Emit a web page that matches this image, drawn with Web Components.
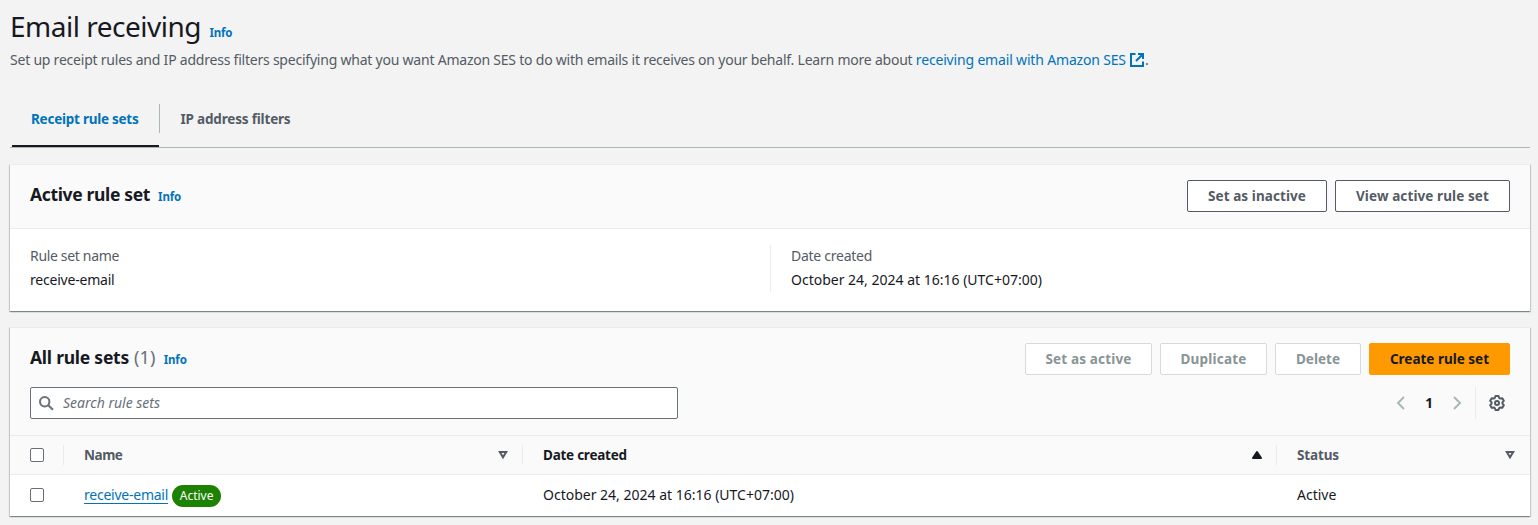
<!DOCTYPE html>
<html lang="en"><head><meta charset="utf-8"><title>Email receiving</title>
<style>body{margin:0;background:#f3f3f3;font-family:"Noto Sans","Open Sans",sans-serif;font-size:14px;line-height:20px;color:#16191f}</style></head>
<body><ses-page></ses-page>
<script>
const define = (name, html, setup) => customElements.define(name, class extends HTMLElement {
  constructor() { super(); this.attachShadow({mode: 'open'}).innerHTML = html; }
  connectedCallback() { if (setup) setup(this, this.shadowRoot); }
});

/* Text run with its own size, weight and tracking. */
define('ui-text', `<style>:host{display:inline-block;white-space:pre}</style><slot></slot>`, el => {
  const a = n => el.getAttribute(n);
  if (a('size')) el.style.fontSize = a('size') + 'px';
  if (a('weight')) el.style.fontWeight = a('weight');
  if (a('track')) el.style.letterSpacing = a('track') + 'px';
});

define('ui-info', `<style>:host{display:inline-block;font-size:11.5px;font-weight:700;color:#0073bb;letter-spacing:-.15px}</style><slot></slot>`);

const icons = {
  external: '<path d="M6.500 2H2v12h12V9.500M9 2h5v5M14 2 7 9" fill="none" stroke="currentColor" stroke-width="2"/>',
  search: '<circle cx="6.700" cy="6.700" r="4.700" fill="none" stroke="currentColor" stroke-width="2"/><path d="m10.200 10.200 4.800 4.600" fill="none" stroke="currentColor" stroke-width="2"/>',
  left: '<path d="m11 2-6 6 6 6" fill="none" stroke="currentColor" stroke-width="2"/>',
  right: '<path d="m5 2 6 6-6 6" fill="none" stroke="currentColor" stroke-width="2"/>',
  down: '<path d="M4.800 4.900h6.400L8 10.300Z" fill="none" stroke="currentColor" stroke-width="2"/>',
  up: '<path d="M4 11h8L8 5Z" fill="currentColor" stroke="currentColor" stroke-width="2" stroke-linejoin="round"/>',
  gear: '<path d="M6.500 1h3l.7 2 1 .6 2.100-.4 1.500 2.600L13.400 7.400v1.200l1.400 1.600-1.500 2.600-2.100-.4-1 .6-.7 2h-3l-.7-2-1-.6-2.100.4-1.500-2.600L2.600 8.600V7.400L1.200 5.800l1.500-2.600 2.100.4 1-.6Z" fill="none" stroke="currentColor" stroke-width="2" stroke-linejoin="round"/><circle cx="8" cy="8" r="2" fill="none" stroke="currentColor" stroke-width="2"/>'
};
define('ui-icon', `<style>:host{display:inline-block;width:16px;height:16px;flex:none}svg{display:block}</style><svg width="16" height="16" viewBox="0 0 16 16"></svg>`,
  (el, r) => { r.querySelector('svg').innerHTML = icons[el.getAttribute('name')]; });

define('ui-button', `<style>
:host{display:flex;align-items:center;justify-content:center;box-sizing:border-box;height:32px;border:1px solid #545b64;border-radius:2px;background:#fff;color:#545b64;font-size:13.5px;font-weight:700;white-space:pre}
:host([disabled]){border-color:#d5dbdb;color:#879596}
:host([primary]){border-color:#f90;background:#f90;color:#16191f}
</style><slot></slot>`, el => { el.style.width = el.getAttribute('width') + 'px'; el.style.letterSpacing = el.getAttribute('track') + 'px'; });

define('ui-checkbox', `<style>:host{display:block;box-sizing:border-box;width:14px;height:14px;border:1px solid #687078;border-radius:2px;background:#fff}</style>`);

define('ui-badge', `<style>:host{display:inline-flex;align-items:center;justify-content:center;width:49px;height:22px;margin-top:2px;border-radius:11px;background:#1d8102;color:#fff;font-size:12px}</style><slot></slot>`);

define('ui-card', `<style>
:host{display:block;box-sizing:border-box;background:#fff;border-top:1px solid #eaeded;box-shadow:0 1px 1px 0 rgba(0,28,36,.3),1px 1px 1px 0 rgba(0,28,36,.15),-1px 1px 1px 0 rgba(0,28,36,.15)}
header{background:#fafafa;border-bottom:1px solid #eaeded;padding:15px 20px 16px}
</style><header><slot name="header"></slot></header><slot></slot>`);

define('ui-heading', `<style>:host{display:flex;justify-content:space-between;height:32px}
.t{display:flex;align-items:baseline;gap:8px;height:28px;line-height:28px}.a{display:flex;gap:8px}</style>
<div class="t"><slot></slot></div><div class="a"><slot name="actions"></slot></div>`);

define('ui-tabs', `<style>
:host{display:flex;height:44px;border-bottom:1px solid #aab7b8;font-size:13.5px;font-weight:700;color:#545b64}
div{box-sizing:border-box;height:44px;line-height:32px}
.on{width:147px;margin-left:2px;padding-left:19px;border-bottom:2px solid #16191f;color:#0073bb}
.sep{width:1px;height:29px;margin-top:1px;background:#aab7b8}
.off{padding-left:20.5px}
</style><div class="on"><ui-text track="-.25">Receipt rule sets</ui-text></div><div class="sep"></div><div class="off"><ui-text track="-.18">IP address filters</ui-text></div>`);

define('ui-field', `<style>:host{display:block;line-height:24px;height:47px}.l{color:#545b64}.l,.v{position:relative;top:-1px}</style>
<div class="l"><slot name="label"></slot></div><div class="v"><slot></slot></div>`);

define('rule-summary', `<style>:host{display:grid;grid-template-columns:740px 1fr;padding:16px 20px 0}
.r{border-left:1px solid #eaeded;padding-left:20px}</style>
<ui-field><ui-text slot="label" track="-.33">Rule set name</ui-text><ui-text track="-.21">receive-email</ui-text></ui-field>
<div class="r"><ui-field><ui-text slot="label" track="-.26">Date created</ui-text>October 24, 2024 at 16:16 (UTC+07:00)</ui-field></div>`);

define('ui-search', `<style>:host{display:flex;align-items:center;box-sizing:border-box;width:648px;height:32px;border:1px solid #687078;border-radius:2px;background:#fff;color:#687078;padding-left:7px;gap:9px;font-style:italic}</style><ui-icon name="search"></ui-icon><span><slot></slot></span>`);

define('ui-pager', `<style>:host{display:flex;align-items:center;height:32px;color:#aab7b8}
b{width:40px;text-align:center;color:#16191f;font-size:13.5px}
.s{width:1px;height:32px;background:#eaeded;margin:0 13px 0 10px}.g{color:#545b64;margin-right:5px}</style>
<ui-icon name="left"></ui-icon><b><slot></slot></b><ui-icon name="right"></ui-icon><div class="s"></div><ui-icon class="g" name="gear"></ui-icon>`);

define('rule-table', `<style>
:host{display:block}
.row{display:grid;grid-template-columns:54px 459px 754px 253px;height:40px;align-items:center}
.head{height:38px;background:#fafafa;border-bottom:1px solid #eaeded;font-weight:700;font-size:13.5px;color:#545b64}
.c{box-sizing:border-box;display:flex;align-items:center;padding-left:20px}
.head .c{height:20px;justify-content:space-between;padding-right:11px;border-right:1px solid #eaeded}
.head .c:last-child{border:0;padding-right:12px}
.dark{color:#16191f}
.link{color:#0073bb;border-bottom:1px solid #0073bb;line-height:16px;height:16px;margin:1px 4px 0 0}
</style>
<div class="row head"><div class="c"><ui-checkbox></ui-checkbox></div>
<div class="c"><ui-text track="-.45">Name</ui-text><ui-icon name="down"></ui-icon></div>
<div class="c dark"><ui-text track="-.25">Date created</ui-text><ui-icon name="up"></ui-icon></div>
<div class="c"><ui-text track="-.14">Status</ui-text><ui-icon name="down"></ui-icon></div></div>
<div class="row"><div class="c"><ui-checkbox></ui-checkbox></div>
<div class="c"><span class="link"><ui-text track="-.24">receive-email</ui-text></span><ui-badge>Active</ui-badge></div>
<div class="c">October 24, 2024 at 16:16 (UTC+07:00)</div><div class="c">Active</div></div>`);

define('ses-page', `<style>
:host{display:block;padding:8px 8px 0 10px;height:525px;box-sizing:border-box}
.title{display:flex;align-items:baseline;gap:8.5px;line-height:36px;height:36px}
.desc{display:flex;margin-top:6px;height:20px;color:#545b64}
.desc a{display:flex;color:#0073bb}
.desc ui-icon{margin:2px 0 0 3px}
ui-tabs{margin-top:33px}
ui-card{width:1520px}
.one{margin-top:16px;height:147px}
.two{margin-top:16px;height:189px}
.tools{display:flex;justify-content:space-between;margin-top:12px}
.count{color:#687078;margin-left:5px}
</style>
<div class="title"><ui-text size="28" track="-.5">Email receiving</ui-text><ui-info>Info</ui-info></div>
<div class="desc"><ui-text track="-.222">Set up receipt rules and IP address filters specifying what you want Amazon SES to do with emails it receives on your behalf. Learn more about </ui-text><a><ui-text track="-.17">receiving email with Amazon SES</ui-text><ui-icon name="external"></ui-icon></a>.</div>
<ui-tabs></ui-tabs>
<ui-card class="one"><ui-heading slot="header"><ui-text size="17.5" weight="700" track="-.34">Active rule set</ui-text><ui-info>Info</ui-info>
<ui-button slot="actions" width="140" track=".08">Set as inactive</ui-button><ui-button slot="actions" width="175" track=".1">View active rule set</ui-button></ui-heading>
<rule-summary></rule-summary></ui-card>
<ui-card class="two"><div slot="header"><ui-heading><span><ui-text size="17.5" weight="700" track="-.24">All rule sets</ui-text><ui-text class="count" size="18" track=".2">(1)</ui-text></span><ui-info>Info</ui-info>
<ui-button slot="actions" disabled width="127" track=".16">Set as active</ui-button><ui-button slot="actions" disabled width="107" track=".2">Duplicate</ui-button><ui-button slot="actions" disabled width="86" track=".05">Delete</ui-button><ui-button slot="actions" primary width="141" track="0">Create rule set</ui-button></ui-heading>
<div class="tools"><ui-search>Search rule sets</ui-search><ui-pager>1</ui-pager></div></div>
<rule-table></rule-table></ui-card>`);
</script></body></html>
